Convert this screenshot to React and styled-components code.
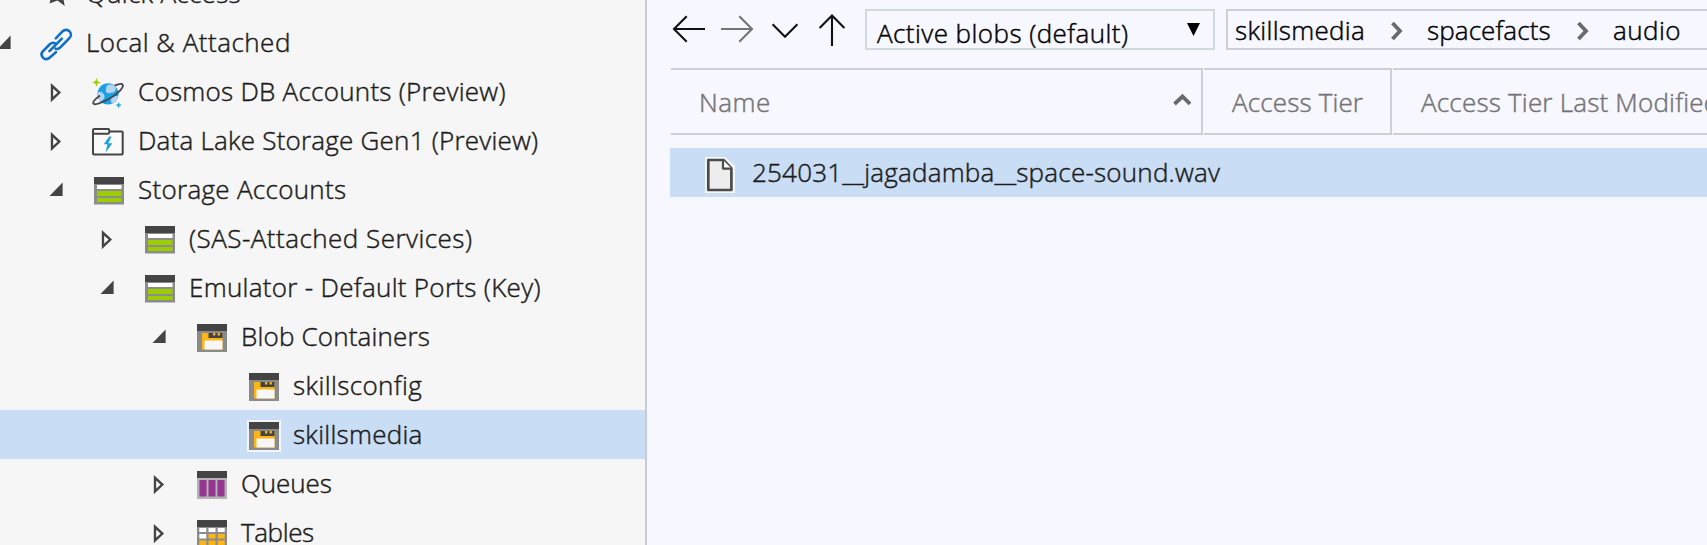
import React from "react";
import styled, { createGlobalStyle } from "styled-components";

const GlobalStyle = createGlobalStyle`
  * { box-sizing: border-box; }
  body {
    margin: 0;
    overflow: hidden;
    font-family: "Open Sans", "Segoe UI", sans-serif;
    font-size: 26px;
    font-weight: 300;
    color: #1c1c1c;
  }
`;

const Window = styled.div`
  display: flex;
  width: 100%;
  height: 545px;
  overflow: hidden;
  background: #f7f7ff;
`;

const Sidebar = styled.nav`
  flex: none;
  width: 647px;
  overflow: hidden;
  background: #f6f6f6;
  border-right: 2px solid #c9c9d9;
`;

const Tree = styled.ul`
  margin: -31px 0 0;
  padding: 0;
  list-style: none;
`;

const INDENT = [0, 52, 103, 155, 207];

const TreeRow = styled.li`
  display: flex;
  align-items: stretch;
  height: 49px;
  padding-left: ${(p) => INDENT[p.$level]}px;
  background: ${(p) => (p.$selected ? "#c9ddf5" : "transparent")};
`;

const Toggle = styled.span`
  flex: none;
  width: 44px;
  margin-left: -4px;
`;

const IconSlot = styled.span`
  flex: none;
  width: 32px;
  margin-right: 14px;
`;

const Label = styled.span`
  line-height: 48px;
  white-space: nowrap;
  letter-spacing: ${(p) => p.$tracking || 0}px;
  -webkit-text-stroke: 0.45px currentColor;
`;

const Svg = styled.svg`
  display: block;
  overflow: visible;
`;

const Main = styled.main`
  flex: 1;
  min-width: 0;
  padding: 9px 0 0 23px;
  overflow: hidden;
`;

const Toolbar = styled.header`
  display: flex;
  height: 41px;
`;

const NavButtons = styled.div`
  flex: none;
  width: 195px;
`;

const TierSelect = styled.div`
  display: flex;
  justify-content: space-between;
  flex: none;
  width: 350px;
  padding: 0 13px 0 10px;
  border: 2px solid #d2d9df;
  color: #000;

  ${Label} { line-height: 45px; }
`;

const Breadcrumb = styled.div`
  display: flex;
  flex: none;
  width: 500px;
  margin-left: 11px;
  padding-left: 7px;
  border: 2px solid #cdcddc;
  color: #000;

  ${Label} { line-height: 39px; }
`;

const Crumb = styled.span`
  flex: none;
  display: flex;
  width: ${(p) => p.$width}px;
`;

const ColumnHeaders = styled.div`
  display: flex;
  gap: 1px;
  height: 67px;
  margin: 18px 0 0 1px;
`;

const Column = styled.div`
  display: flex;
  justify-content: space-between;
  flex: none;
  width: ${(p) => p.$width}px;
  padding: 0 10px 0 28px;
  border: solid #cdcddb;
  border-width: 2px 2px 2px 0;
  color: #747474;

  ${Label} { line-height: 65px; }
`;

const FileRow = styled.div`
  display: flex;
  height: 49px;
  margin-top: 13px;
  padding-left: 35px;
  background: #c9ddf5;
`;

const FileIconSlot = styled.span`
  flex: none;
  width: 47px;
`;

const Chevron = styled.svg`
  flex: none;
  display: block;
  fill: none;
  stroke: #6a6a6a;
  stroke-width: 3.8;
`;

function ToggleMark({ open }) {
  return (
    <Svg width="43" height="49">
      {open ? (
        <path d="M14.6 17.5V31H1.5Z" fill="#444" />
      ) : (
        <path d="M4 18.8V32.4L11.300 25.6Z" fill="#fff" stroke="#444" strokeWidth="2.4" />
      )}
    </Svg>
  );
}

function StarIcon() {
  return (
    <Svg width="32" height="49">
      <path d="M17 8L21 20L32 20L23 27.500L24.700 37L17.500 31.500L9.500 34.500L11.500 26L3 20H13Z" fill="#444" />
    </Svg>
  );
}

function LinkIcon() {
  return (
    <Svg width="32" height="49" fill="none" stroke="#0f6fc6" strokeWidth="2.6" strokeLinecap="round">
      <path d="M15.8 20.4L22.7 13.2A4.700 4.700 0 0 1 29.4 20.100L20.6 29.200C19 30.800 17.200 31.300 15.600 30.700" />
      <path d="M15.900 34.200L9 40.200A4.700 4.700 0 0 1 2.600 33.500L9.800 26.300C11.600 24.700 13.600 24.500 15 25.400" />
      <path d="M9.500 33.100L21.800 20.700" />
    </Svg>
  );
}

function CosmosIcon() {
  return (
    <Svg width="32" height="49">
      <circle cx="16" cy="26.900" r="10.600" fill="#1ba1e2" />
      <path d="M15 18.500C18 16.500 22 17.500 23.500 19.700C24.500 23 22.500 26 19.500 25.600C17 27 14 26 13.500 23.800C14.500 22.500 13.500 20.500 15 18.500Z" fill="#b5d3f2" />
      <path d="M5.600 25.500C8.500 23.500 12.500 26.500 12.500 29.500C12.500 31.500 11 33 9 34.500C6.500 32.500 5.100 28.500 5.600 25.500Z" fill="#b5d3f2" />
      <path d="M18.500 32C20.500 29.500 24 28.500 26.200 29.500C25.500 32.500 22.500 35.500 19.500 36.500Z" fill="#b5d3f2" />
      <path d="M8 28.500C4 31.500 0.500 34.800 1.200 36.400C2.200 38.600 10 36 18.500 31C27 26 32 20 30.700 17.800C30 16.500 27 16.800 22.500 18.700" fill="none" stroke="#4a4550" strokeWidth="1.900" />
      <path d="M4.400 11l1.200 3.200 3.200 1.200-3.200 1.200-1.200 3.400-1.200-3.400-3.200-1.200 3.200-1.200z" fill="#a0cf00" />
      <path d="M26.700 35.600l.7 1.800 1.800.7-1.800.7-.7 1.900-.7-1.900-1.800-.7 1.800-.7z" fill="#1ba1e2" stroke="#1ba1e2" strokeWidth=".5" />
    </Svg>
  );
}

function DataLakeIcon() {
  return (
    <Svg width="32" height="49" fill="none" stroke="#444" strokeWidth="2">
      <rect x="1" y="15.500" width="29.700" height="23" rx="1" fill="#fafafa" />
      <path d="M1 17.800V14.200Q1 13 2.200 13H16.200Q17.200 13 17.200 14.200V16.600Q17.200 17.700 16.200 17.700H1" fill="#fafafa" />
      <path d="M17.200 20.500L11.800 28.300H15.400L13.600 36.500L20.400 27.300H16.400L19.400 20.500Z" fill="#1ba1e2" stroke="none" />
    </Svg>
  );
}

function StorageIcon() {
  return (
    <Svg width="32" height="49">
      <g transform="translate(2 12)">
        <rect width="30" height="27.500" fill="#8c8c8c" />
        <rect width="30" height="7" fill="#444" />
        <rect x="3" y="8" width="24.500" height="4" fill="#fff" />
        <rect x="3" y="14" width="24.500" height="5" fill="#9bcd00" />
        <rect x="3" y="21" width="24.500" height="4" fill="#9bcd00" />
      </g>
    </Svg>
  );
}

function BlobIcon({ halo }) {
  return (
    <Svg width="32" height="49">
      <g transform="translate(2 12)">
        {halo && <rect x="-2" y="-2" width="34" height="32" fill="#f3f5f8" />}
        <rect width="30" height="28" fill="#8a8a8a" />
        <rect width="30" height="7" fill="#444" />
        <rect x="5" y="9" width="20.500" height="16.500" fill="#fdb513" />
        <path d="M11.500 9H25.500V14H11.500Z" fill="#444" />
        <path d="M16 9h2.300v2.500H16zM20.600 9h2.300v2.500h-2.300z" fill="#fdb513" />
        <rect x="7.500" y="16.500" width="18" height="9" fill="#f7f7f7" />
      </g>
    </Svg>
  );
}

function QueueIcon() {
  return (
    <Svg width="32" height="49">
      <g transform="translate(2 12)">
        <rect width="30" height="28" fill="#b4b4b4" />
        <rect width="30" height="7" fill="#444" />
        {[2.5, 11.5, 20.5].map((x) => (
          <rect key={x} x={x} y="9" width="7" height="16.500" fill="#953592" />
        ))}
      </g>
    </Svg>
  );
}

function TableIcon() {
  const rows = [
    { y: 8, h: 4, fills: ["#fff", "#fff", "#fff"] },
    { y: 14, h: 4.5, fills: ["#fff", "#fdb513", "#fdb513"] },
    { y: 20.5, h: 4.5, fills: ["#fdb513", "#fdb513", "#fdb513"] },
  ];
  return (
    <Svg width="32" height="49">
      <g transform="translate(2 12)">
        <rect width="30" height="28" fill="#8c8c8c" />
        <rect width="30" height="7" fill="#444" />
        {rows.map((r) =>
          r.fills.map((fill, i) => (
            <rect key={`${r.y}-${i}`} x={2.3 + i * 9.2} y={r.y} width="7" height={r.h} fill={fill} />
          ))
        )}
      </g>
    </Svg>
  );
}

function FileIcon() {
  return (
    <Svg width="32" height="49" fill="none" strokeLinejoin="round">
      <path d="M0 9H20L30 18V45H0Z" fill="#f4f6f8" />
      <path d="M3.300 12H18.500L26.400 20.500V42H3.300Z" fill="#ededed" stroke="#4a4c4a" strokeWidth="2.700" />
      <path d="M18 12V20.600H26.400" fill="#fff" stroke="#4a4c4a" strokeWidth="2.200" />
    </Svg>
  );
}

function NavArrows() {
  return (
    <Svg width="195" height="41" fill="none" stroke="#111" strokeWidth="2.100">
      <path d="M35 20H4M16.700 7.300L4 20L16.700 32.700" />
      <path d="M51 20H82M69.300 7.300L82 20L69.300 32.700" stroke="#747474" />
      <path d="M102.600 15.300L115 27.700L127.400 15.300" />
      <path d="M162 37V7M149.600 19L162 6.600L174.400 19" />
    </Svg>
  );
}

const tree = [
  { text: "Quick Access", level: 0, icon: <StarIcon />, tracking: 0.28 },
  { text: "Local & Attached", level: 0, open: true, icon: <LinkIcon />, tracking: 0.5 },
  { text: "Cosmos DB Accounts (Preview)", level: 1, open: false, icon: <CosmosIcon />, tracking: 0.26 },
  { text: "Data Lake Storage Gen1 (Preview)", level: 1, open: false, icon: <DataLakeIcon />, tracking: 0.218 },
  { text: "Storage Accounts", level: 1, open: true, icon: <StorageIcon />, tracking: 0.295 },
  { text: "(SAS-Attached Services)", level: 2, open: false, icon: <StorageIcon />, tracking: 0.47 },
  { text: "Emulator - Default Ports (Key)", level: 2, open: true, icon: <StorageIcon />, tracking: 0.3 },
  { text: "Blob Containers", level: 3, open: true, icon: <BlobIcon />, tracking: 0.16 },
  { text: "skillsconfig", level: 4, icon: <BlobIcon />, tracking: 0.38 },
  { text: "skillsmedia", level: 4, selected: true, icon: <BlobIcon halo />, tracking: 0.25 },
  { text: "Queues", level: 3, open: false, icon: <QueueIcon />, tracking: -0.1 },
  { text: "Tables", level: 3, open: false, icon: <TableIcon />, tracking: -0.4 },
];

export default function App() {
  return (
    <>
      <GlobalStyle />
      <Window>
        <Sidebar>
          <Tree>
            {tree.map((node) => (
              <TreeRow key={node.text} $level={node.level} $selected={node.selected}>
                <Toggle>{node.open !== undefined && <ToggleMark open={node.open} />}</Toggle>
                <IconSlot>{node.icon}</IconSlot>
                <Label $tracking={node.tracking}>{node.text}</Label>
              </TreeRow>
            ))}
          </Tree>
        </Sidebar>
        <Main>
          <Toolbar>
            <NavButtons><NavArrows /></NavButtons>
            <TierSelect>
              <Label $tracking={0.438}>Active blobs (default)</Label>
              <Svg width="13" height="37"><path d="M0 12H13L6.500 25Z" fill="#000" /></Svg>
            </TierSelect>
            <Breadcrumb>
              <Crumb $width={156}><Label $tracking={0.3}>skillsmedia</Label></Crumb>
              <Crumb $width={36}>
                <Chevron width="12" height="37"><path d="M1.500 12L9 20L1.500 28" /></Chevron>
              </Crumb>
              <Crumb $width={150}><Label $tracking={0.09}>spacefacts</Label></Crumb>
              <Crumb $width={36}>
                <Chevron width="12" height="37"><path d="M1.500 12L9 20L1.500 28" /></Chevron>
              </Crumb>
              <Crumb $width={80}><Label $tracking={0.45}>audio</Label></Crumb>
            </Breadcrumb>
          </Toolbar>
          <ColumnHeaders>
            <Column $width={532}>
              <Label $tracking={0.5}>Name</Label>
              <Chevron width="18" height="63"><path d="M1.500 34L9.500 26.500L17 34" /></Chevron>
            </Column>
            <Column $width={188}><Label $tracking={0.15}>Access Tier</Label></Column>
            <Column $width={400}><Label $tracking={0.2}>Access Tier Last Modified</Label></Column>
          </ColumnHeaders>
          <FileRow>
            <FileIconSlot><FileIcon /></FileIconSlot>
            <Label $tracking={0.218}>254031__jagadamba__space-sound.wav</Label>
          </FileRow>
        </Main>
      </Window>
    </>
  );
}
